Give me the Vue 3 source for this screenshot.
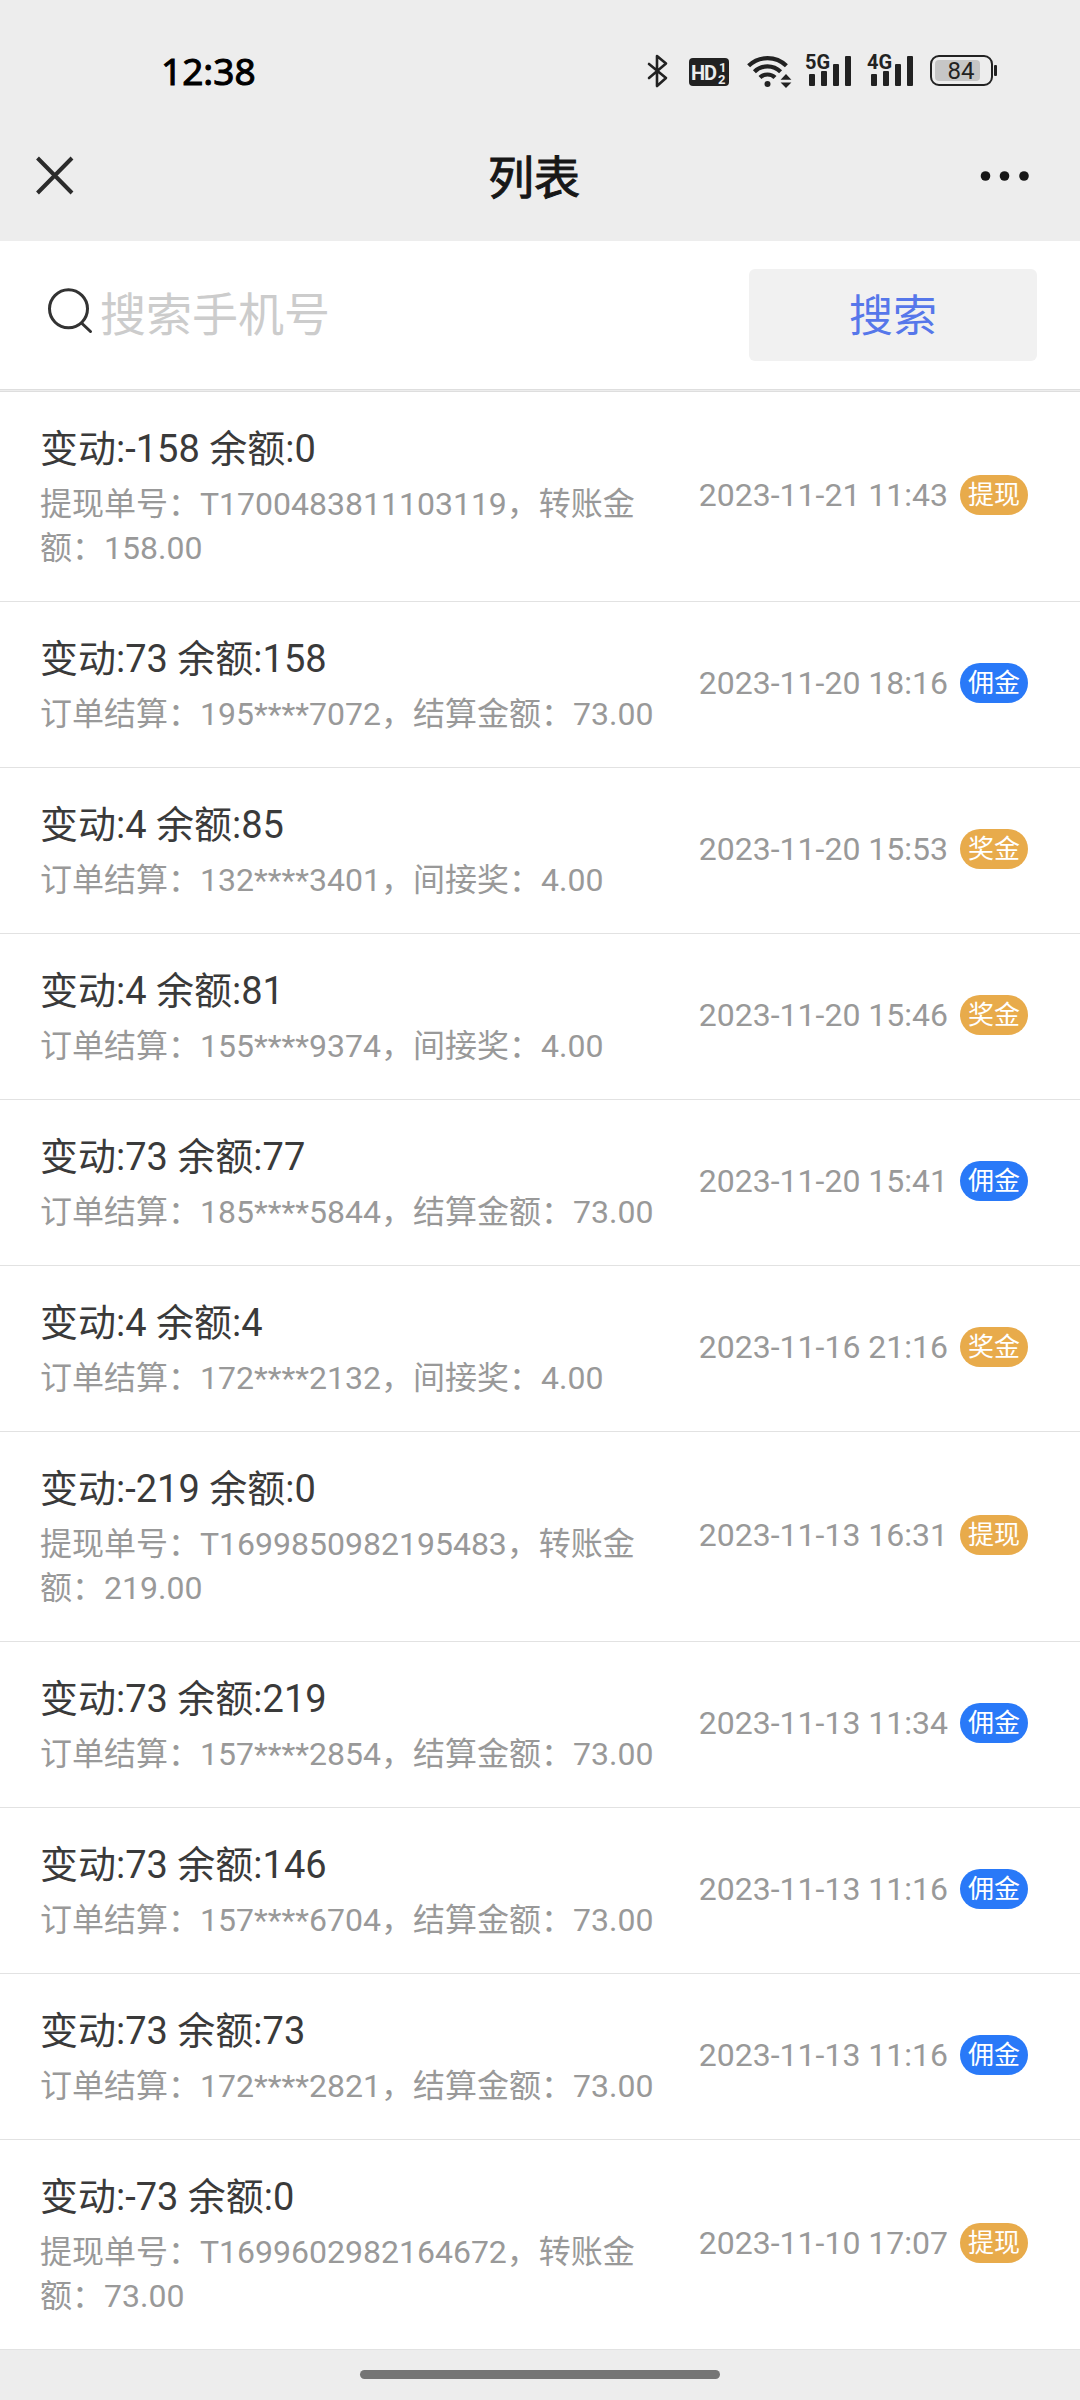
<script setup>
import { ref } from 'vue'

const keyword = ref('')

const tagTones = { 提现: 'amber', 奖金: 'amber', 佣金: 'blue' }

const records = [
  { change: '-158', balance: '0', note: '提现单号：T1700483811103119，转账金额：158.00', time: '2023-11-21 11:43', tag: '提现' },
  { change: '73', balance: '158', note: '订单结算：195****7072，结算金额：73.00', time: '2023-11-20 18:16', tag: '佣金' },
  { change: '4', balance: '85', note: '订单结算：132****3401，间接奖：4.00', time: '2023-11-20 15:53', tag: '奖金' },
  { change: '4', balance: '81', note: '订单结算：155****9374，间接奖：4.00', time: '2023-11-20 15:46', tag: '奖金' },
  { change: '73', balance: '77', note: '订单结算：185****5844，结算金额：73.00', time: '2023-11-20 15:41', tag: '佣金' },
  { change: '4', balance: '4', note: '订单结算：172****2132，间接奖：4.00', time: '2023-11-16 21:16', tag: '奖金' },
  { change: '-219', balance: '0', note: '提现单号：T1699850982195483，转账金额：219.00', time: '2023-11-13 16:31', tag: '提现' },
  { change: '73', balance: '219', note: '订单结算：157****2854，结算金额：73.00', time: '2023-11-13 11:34', tag: '佣金' },
  { change: '73', balance: '146', note: '订单结算：157****6704，结算金额：73.00', time: '2023-11-13 11:16', tag: '佣金' },
  { change: '73', balance: '73', note: '订单结算：172****2821，结算金额：73.00', time: '2023-11-13 11:16', tag: '佣金' },
  { change: '-73', balance: '0', note: '提现单号：T1699602982164672，转账金额：73.00', time: '2023-11-10 17:07', tag: '提现' },
]
</script>

<template>
  <div class="page" lang="zh-CN">
    <header class="top">
      <div class="status">
        <time class="clock">12:38</time>
        <div class="status-icons">
          <!-- Bluetooth -->
          <svg width="30" height="34" viewBox="0 0 30 34" fill="none" stroke="#222" stroke-width="2.6" stroke-linejoin="round" stroke-linecap="round">
            <path d="M3 10 L20 24 L11 32 V2 L20 9.5 L3 24" />
          </svg>
          <!-- HD voice -->
          <svg width="46" height="34" viewBox="0 0 46 34">
            <rect x="1" y="4" width="40" height="28" rx="4" fill="#222" />
            <g fill="#ededed" font-weight="700">
              <text x="3" y="26" font-size="20">H</text>
              <text x="16" y="26" font-size="20">D</text>
              <text x="31" y="18" font-size="13">1</text>
              <text x="30" y="30" font-size="13">2</text>
            </g>
          </svg>
          <!-- Wi-Fi -->
          <svg width="48" height="34" viewBox="0 0 48 34">
            <g fill="none" stroke="#222" stroke-width="4.2">
              <path d="M2.6 11.8 A27 27 0 0 1 40.4 11.8" />
              <path d="M8.4 17.8 A18.6 18.6 0 0 1 34.6 17.8" />
              <path d="M14 23.6 A10.6 10.6 0 0 1 29 23.6" />
            </g>
            <circle cx="21.5" cy="30" r="3" fill="#222" />
            <path d="M40 20 L45.4 25.8 H34.6Z M40 34 L34.6 28.4 H45.4Z" fill="#222" />
          </svg>
          <!-- Mobile signal, one per SIM -->
          <svg v-for="net in ['5G', '4G']" :key="net" width="50" height="34" viewBox="0 0 50 34" fill="#222">
            <text x="-1" y="15" font-size="20" font-weight="700">{{ net }}</text>
            <rect x="3" y="20" width="6" height="12" rx="1" />
            <rect x="15" y="17" width="6" height="15" rx="1" />
            <rect x="27" y="10" width="6" height="22" rx="1" />
            <rect x="39" y="2" width="6" height="30" rx="1" />
          </svg>
          <!-- Battery -->
          <svg width="68" height="34" viewBox="0 0 68 34">
            <rect x="1" y="2" width="61" height="29" rx="8" fill="none" stroke="#222" stroke-width="2" />
            <rect x="5" y="6" width="45" height="21" rx="4" fill="#c6c6c6" />
            <rect x="64" y="11" width="3" height="11" rx="1" fill="#222" />
            <text x="31" y="25" font-size="24" text-anchor="middle" fill="#222">84</text>
          </svg>
        </div>
      </div>
      <nav class="nav">
        <button type="button" class="nav-button" aria-label="关闭">
          <svg width="48" height="48" viewBox="0 0 48 48" stroke="#2b2b2b" stroke-width="4">
            <path d="M1.5 6 L36 41 M36 6 L1.5 41" />
          </svg>
        </button>
        <h1 class="nav-title">列表</h1>
        <button type="button" class="nav-button" aria-label="更多">
          <svg width="48" height="48" viewBox="0 0 48 48" fill="#171717">
            <circle cx="1.5" cy="24" r="4.8" />
            <circle cx="20.5" cy="24" r="4.8" />
            <circle cx="40" cy="24" r="4.8" />
          </svg>
        </button>
      </nav>
    </header>

    <form class="search" @submit.prevent>
      <label class="search-label" for="keyword" aria-label="搜索手机号">
        <svg width="44" height="54" viewBox="0 0 44 54" fill="none" stroke="#333" stroke-width="3">
          <circle cx="20.5" cy="20.8" r="19" />
          <path d="M33.5 35 L42.5 43.5" stroke-linecap="round" />
        </svg>
      </label>
      <input id="keyword" v-model="keyword" class="search-input" type="text" placeholder="搜索手机号" />
      <button type="submit" class="search-button">搜索</button>
    </form>

    <ul class="records">
      <li v-for="(item, i) in records" :key="i" class="record">
        <div class="record-body">
          <p class="record-title">变动:{{ item.change }} 余额:{{ item.balance }}</p>
          <p class="record-note">{{ item.note }}</p>
        </div>
        <div class="record-meta">
          <time>{{ item.time }}</time>
          <span class="tag" :class="tagTones[item.tag]">{{ item.tag }}</span>
        </div>
      </li>
    </ul>

    <footer class="home-bar"><span class="home-indicator"></span></footer>
  </div>
</template>

<style>
body {
  margin: 0;
  background: #ededed;
}
</style>

<style scoped>
.page {
  display: flex;
  flex-direction: column;
  min-height: 100vh;
  font-family: Roboto, 'Noto Sans CJK SC', sans-serif;
  background: #ededed;
}

.page svg {
  display: block;
  flex: none;
  overflow: visible;
}

button,
input {
  margin: 0;
  padding: 0;
  border: 0;
  background: none;
  font-family: inherit;
}

.status {
  display: flex;
  align-items: center;
  justify-content: space-between;
  height: 78px;
  padding: 32px 82px 0 161px;
}

.clock {
  font-family: 'Noto Sans', sans-serif;
  font-size: 37px;
  line-height: 48px;
  color: #000;
  -webkit-text-stroke: 1px #000;
}

.status-icons {
  display: flex;
  align-items: center;
  gap: 12px;
}

.nav {
  display: flex;
  align-items: center;
  justify-content: space-between;
  height: 131px;
  padding: 0 48px 0 36px;
}

.nav-button {
  width: 48px;
  height: 48px;
}

.nav-title {
  margin: 0;
  padding-top: 4px;
  font-size: 46px;
  font-weight: 400;
  line-height: 64px;
  color: #171717;
  -webkit-text-stroke: 1px #171717;
}

.search {
  display: flex;
  align-items: center;
  gap: 8px;
  padding: 28px 43px 28px 48px;
  border-bottom: 1px solid #dedede;
  background: #fff;
}

.search-input {
  flex: 1;
  min-width: 0;
  height: 64px;
  font-size: 46px;
  color: #333;
  outline: 0;
}

.search-input::placeholder {
  color: #ccc;
  opacity: 1;
}

.search-button {
  width: 288px;
  height: 92px;
  padding-bottom: 4px;
  border-radius: 6px;
  background: #f1f1f1;
  font-size: 44px;
  color: #5677ea;
}

.records {
  flex: 1;
  margin: 1px 0 0;
  padding: 0;
  border-top: 1px solid #dedede;
  list-style: none;
  background: #fff;
}

.record {
  display: flex;
  align-items: center;
  gap: 32px;
  padding: 32px 52px 31px 40px;
  border-bottom: 1px solid #e2e2e2;
}

.record-body {
  flex: 1;
  min-width: 0;
}

.record-title {
  margin: 0 0 8px;
  font-size: 38px;
  line-height: 50px;
  color: #3a3a3a;
}

.record-note {
  margin: 0;
  font-size: 32px;
  line-height: 44px;
  color: #999;
}

.record-meta {
  display: flex;
  align-items: center;
  gap: 12px;
  padding-bottom: 4px;
  font-size: 32px;
  line-height: 40px;
  color: #999;
  white-space: nowrap;
}

.tag {
  width: 68px;
  border-radius: 20px;
  font-size: 26px;
  text-align: center;
  color: #fff;
}

.amber {
  background: #e8ab4b;
}

.blue {
  background: #2979f8;
}

.home-bar {
  display: flex;
  justify-content: center;
  padding: 20px 0 21px;
}

.home-indicator {
  width: 33.333%;
  height: 9px;
  border-radius: 5px;
  background: #757575;
}
</style>
